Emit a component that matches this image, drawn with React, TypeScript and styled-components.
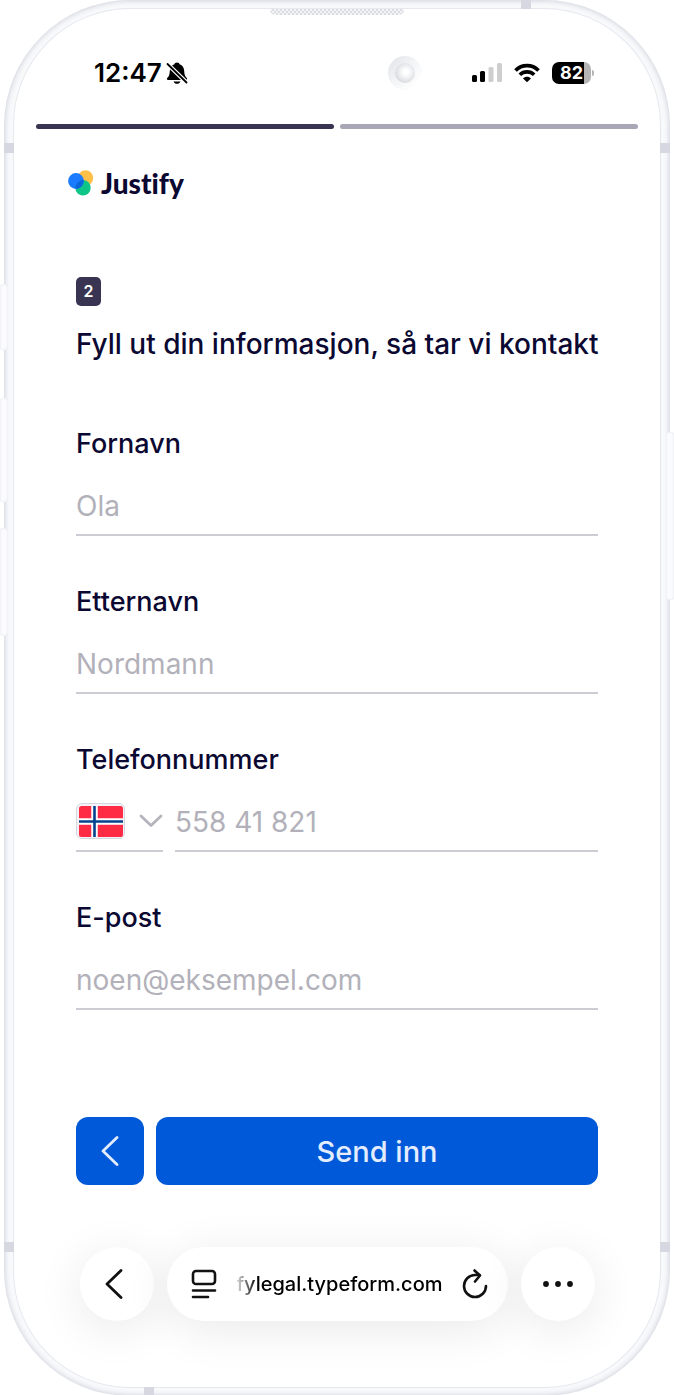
import React from "react";
import styled, { createGlobalStyle } from "styled-components";

const GlobalStyle = createGlobalStyle`
  * { box-sizing: border-box; }
  body {
    margin: 0;
    background: #ffffff;
    font-family: Inter, "Liberation Sans", sans-serif;
    color: #0b0831;
  }
  button, input, select { font: inherit; color: inherit; }
`;

const Stage = styled.main`
  padding: 0 4px;
  overflow: hidden;
`;

const Device = styled.div`
  position: relative;
  padding: 9px 10px;
  border-radius: 126px;
  background: #f8f9fb;
  box-shadow: inset 0 0 5px 1px #d0d3dd;
`;

const Screen = styled.div`
  padding: 47px 0 66px;
  border-radius: 116px;
  background: #ffffff;
  box-shadow: 0 0 0 1px #e6e8ee;
  overflow: hidden;
`;

const Speaker = styled.span`
  position: absolute;
  top: 9px;
  left: 50%;
  width: 134px;
  height: 6px;
  transform: translateX(-50%);
  border-radius: 0 0 5px 5px;
  background: repeating-conic-gradient(#dcdde3 0% 25%, #f4f4f7 0% 50%) 0 0 / 4px 4px;
`;

const Antenna = styled.span<{ $side: "left" | "right"; $edge: "top" | "bottom" }>`
  position: absolute;
  ${(p) => p.$side}: 0;
  ${(p) => p.$edge}: ${(p) => (p.$edge === "top" ? 143 : 144)}px;
  width: 10px;
  height: 10px;
  background: #d6d7e1;
`;

const AntennaCap = styled.span<{ $edge: "top" | "bottom" }>`
  position: absolute;
  ${(p) => p.$edge}: 0;
  ${(p) => (p.$edge === "top" ? "right: 139px" : "left: 140px")};
  width: 10px;
  height: 9px;
  background: #d6d7e1;
`;

const SideKey = styled.span<{ $side: "left" | "right"; $top: number; $length: number }>`
  position: absolute;
  ${(p) => p.$side}: -4px;
  top: ${(p) => p.$top}px;
  width: 8px;
  height: ${(p) => p.$length}px;
  border-radius: 3px;
  background: #fbfbfd;
  box-shadow: inset 0 0 2px #d9dbe6;
`;

const StatusBar = styled.header`
  display: flex;
  align-items: center;
  justify-content: space-between;
  height: 34px;
  padding: 0 66px 0 80px;
  color: #000000;
`;

const StatusGroup = styled.div<{ $gap: number }>`
  display: flex;
  align-items: center;
  gap: ${(p) => p.$gap}px;
`;

const Clock = styled.time`
  font-size: 26px;
  line-height: 34px;
  font-weight: 600;
`;

const Camera = styled.span`
  display: flex;
  align-items: center;
  justify-content: center;
  width: 34px;
  height: 34px;
  border-radius: 50%;
  background: linear-gradient(135deg, #dfe1e6, #f3f4f6 45%, #ffffff 85%);

  &::after {
    content: "";
    width: 20px;
    height: 20px;
    border-radius: 50%;
    background: radial-gradient(circle at 55% 45%, #ffffff 15%, #d6d9de 75%);
  }
`;

const Battery = styled.span`
  display: flex;
  align-items: center;
  gap: 1px;

  &::after {
    content: "";
    width: 2px;
    height: 6px;
    border-radius: 0 3px 3px 0;
    background: #b5b5b5;
  }
`;

const BatteryLevel = styled.span`
  width: 39px;
  height: 22px;
  border-radius: 7px;
  background: linear-gradient(90deg, #000000 82%, #b5b5b5 82%);
  color: #ffffff;
  font-size: 18px;
  line-height: 22px;
  font-weight: 700;
  text-align: center;
`;

const Progress = styled.div`
  display: flex;
  gap: 6px;
  margin: 34px 22px 0;
`;

const ProgressStep = styled.span<{ $done?: boolean }>`
  flex: 1;
  height: 5px;
  border-radius: 3px;
  background: ${(p) => (p.$done ? "#393452" : "#a9a7b5")};
`;

const Brand = styled.a`
  display: flex;
  align-items: center;
  gap: 7px;
  width: fit-content;
  height: 34px;
  margin: 37px 54px 0;
  color: #0b0831;
  font-family: Lato, sans-serif;
  font-size: 28px;
  line-height: 34px;
  font-weight: 900;
  font-variant-ligatures: none;
  text-decoration: none;
`;

const Form = styled.form`
  display: flex;
  flex-direction: column;
  margin: 77px 62px 0;
`;

const StepBadge = styled.span`
  width: 25px;
  height: 29px;
  border-radius: 5px;
  background: #393452;
  color: #ffffff;
  font-size: 16px;
  line-height: 29px;
  font-weight: 600;
  text-align: center;
`;

const Title = styled.h1`
  margin: 18px 0 62px;
  font-size: 28px;
  line-height: 40px;
  font-weight: 450;
  white-space: nowrap;
`;

const Fields = styled.div`
  display: flex;
  flex-direction: column;
  gap: 48px;
`;

const Field = styled.div`
  display: flex;
  flex-direction: column;
  gap: 20px;
`;

const Label = styled.label`
  font-size: 27px;
  line-height: 36px;
  font-weight: 450;
`;

const TextInput = styled.input`
  flex: 1;
  width: 100%;
  min-width: 0;
  height: 54px;
  min-height: 54px;
  padding: 0 0 4px;
  border: 0;
  border-bottom: 2px solid #cdccd4;
  border-radius: 0;
  outline: 0;
  background: transparent;
  font-size: 28px;

  &::placeholder {
    color: #b2b1ba;
    opacity: 1;
  }
`;

const PhoneRow = styled.div`
  display: flex;
  gap: 12px;
`;

const Country = styled.div`
  position: relative;
  display: flex;
  align-items: center;
  gap: 14px;
  width: 87px;
  height: 54px;
  padding-bottom: 6px;
  border-bottom: 2px solid #cdccd4;
`;

const CountrySelect = styled.select`
  position: absolute;
  inset: 0;
  width: 100%;
  opacity: 0;
  cursor: pointer;
`;

const Actions = styled.div`
  display: flex;
  gap: 12px;
  margin-top: 107px;
`;

const ActionButton = styled.button<{ $wide?: boolean }>`
  display: flex;
  flex: ${(p) => (p.$wide ? "1" : "0 0 68px")};
  align-items: center;
  justify-content: center;
  height: 68px;
  padding: 0;
  border: 0;
  border-radius: 12px;
  background: #0059d8;
  color: #e3edff;
  font-size: 29px;
  font-weight: 500;
  cursor: pointer;
`;

const BrowserBar = styled.nav`
  display: flex;
  gap: 13px;
  margin: 62px 65px 0 66px;
  color: #111111;
`;

const RoundButton = styled.button<{ $back?: boolean }>`
  display: flex;
  flex: 0 0 74px;
  align-items: center;
  justify-content: center;
  height: 74px;
  padding: 0 ${(p) => (p.$back ? 6 : 0)}px 0 0;
  border: 0;
  border-radius: 50%;
  background: #ffffff;
  box-shadow: 0 8px 48px rgba(0, 0, 0, 0.09);
  cursor: pointer;
`;

const AddressBar = styled.div`
  display: flex;
  flex: 1;
  align-items: center;
  justify-content: space-between;
  min-width: 0;
  height: 74px;
  padding: 0 20px 0 24px;
  border-radius: 37px;
  background: #ffffff;
  box-shadow: 0 8px 48px rgba(0, 0, 0, 0.09);
`;

const PlainButton = styled.button`
  display: flex;
  padding: 0;
  border: 0;
  background: transparent;
  cursor: pointer;
`;

const Address = styled.span`
  color: #000000;
  font-size: 20px;
  line-height: 28px;
  font-weight: 450;
  white-space: nowrap;
  mask-image: linear-gradient(90deg, rgba(0, 0, 0, 0.15), #000000 20px);
`;

const SilentIcon = () => (
  <svg width="22" height="24" viewBox="0 0 22 24" aria-hidden="true">
    <path d="M11 1.5c1.5 0 2.3.8 2.6 1.8 3 .9 4.400 3.400 4.600 6.700.2 4 .9 5.300 2.400 6.800.9.9.6 2.200-.8 2.200H2.200C.8 19 .5 17.700 1.400 16.800c1.500-1.500 2.200-2.800 2.400-6.800C4 6.700 5.400 4.200 8.400 3.300 8.700 2.300 9.500 1.500 11 1.500Z" fill="#000" />
    <path d="M7.500 20.500h7c-.6 1.500-1.900 2.300-3.500 2.300s-2.900-.8-3.500-2.300Z" fill="#000" />
    <path d="M1 2.500 21 22" stroke="#fff" strokeWidth="4.200" />
    <path d="M1.500 3 20.500 21.500" stroke="#000" strokeWidth="1.800" strokeLinecap="round" />
  </svg>
);

const SignalIcon = () => (
  <svg width="30" height="20" viewBox="0 0 30 20" aria-hidden="true">
    <rect x="0" y="12" width="5" height="7" rx="1.500" />
    <rect x="8" y="8" width="5" height="11" rx="1.500" />
    <rect x="16.500" y="4" width="5" height="15" rx="1.500" fill="#cecece" />
    <rect x="25" y="0" width="5" height="19" rx="1.500" fill="#cecece" />
  </svg>
);

const WifiIcon = () => (
  <svg width="26" height="20" viewBox="0 0 26 20" fill="none" stroke="#000" strokeWidth="3.600" aria-hidden="true">
    <path d="M1.500 7.400C7.800 1 18.200 1 24.500 7.400" />
    <path d="M5.800 11.800c4-3.900 10.400-3.900 14.400 0" />
    <path d="M13 19.300 9 15.400c2.200-2.100 5.800-2.100 8 0Z" fill="#000" stroke="none" />
  </svg>
);

const LogoMark = () => (
  <svg width="26" height="26" viewBox="0 0 26 26" aria-hidden="true">
    <circle cx="17.500" cy="8" r="7.700" fill="#ffc04a" />
    <circle cx="15" cy="17.700" r="7.700" fill="#0cc587" />
    <circle cx="8" cy="11" r="7.900" fill="#1b7bff" />
    <path d="M15.500 10.100A7.700 7.700 0 0 0 7.600 18.900 7.900 7.900 0 0 0 15.500 10.100Z" fill="#0a66d9" />
  </svg>
);

const NorwayFlag = () => (
  <svg width="49" height="36" viewBox="0 0 49 36" aria-hidden="true">
    <rect x=".5" y=".5" width="48" height="35" rx="5.500" fill="#f3f3f7" stroke="#d6d6df" />
    <rect x="3" y="3" width="44" height="31" rx="2.500" fill="#ff2b44" />
    <path d="M18.500 3v31M3 18.500h44" stroke="#fff" strokeWidth="6.500" />
    <path d="M18.500 3v31M3 18.500h44" stroke="#06418e" strokeWidth="2.600" />
  </svg>
);

const ChevronDown = () => (
  <svg width="24" height="14" viewBox="0 0 24 14" fill="none" aria-hidden="true">
    <path d="m2 2 10 9.500L22 2" stroke="#b5b4bd" strokeWidth="2.800" strokeLinecap="round" strokeLinejoin="round" />
  </svg>
);

const ChevronLeft = () => (
  <svg width="18" height="30" viewBox="0 0 18 30" fill="none" aria-hidden="true">
    <path d="M16 1.500 2 15l14 13.500" stroke="currentColor" strokeWidth="2.800" strokeLinecap="round" strokeLinejoin="round" />
  </svg>
);

const PageMenuIcon = () => (
  <svg width="26" height="30" viewBox="0 0 26 30" fill="none" stroke="#111" strokeWidth="2.600" strokeLinecap="round" aria-hidden="true">
    <rect x="2" y="2" width="22" height="13" rx="3" />
    <path d="M2 21.500h22M2 28h15" />
  </svg>
);

const ReloadIcon = () => (
  <svg width="26" height="30" viewBox="0 0 26 30" fill="none" stroke="#111" strokeWidth="2.600" strokeLinecap="round" strokeLinejoin="round" aria-hidden="true">
    <path d="M24 17a11 11 0 1 1-11-11h4.500" />
    <path d="m12.500 1.500 5.500 5-5 6" />
  </svg>
);

const MoreIcon = () => (
  <svg width="32" height="8" viewBox="0 0 32 8" fill="#111" aria-hidden="true">
    <circle cx="4" cy="4" r="2.900" />
    <circle cx="16" cy="4" r="2.900" />
    <circle cx="28" cy="4" r="2.900" />
  </svg>
);

export default function App() {
  return (
    <>
      <GlobalStyle />
      <Stage>
        <Device>
          <Antenna $side="left" $edge="top" />
          <Antenna $side="right" $edge="top" />
          <Antenna $side="left" $edge="bottom" />
          <Antenna $side="right" $edge="bottom" />
          <AntennaCap $edge="top" />
          <AntennaCap $edge="bottom" />
          <SideKey $side="left" $top={284} $length={66} />
          <SideKey $side="left" $top={398} $length={104} />
          <SideKey $side="left" $top={528} $length={108} />
          <SideKey $side="right" $top={432} $length={168} />
          <Screen>
            <StatusBar>
              <StatusGroup $gap={4}>
                <Clock>12:47</Clock>
                <SilentIcon />
              </StatusGroup>
              <StatusGroup $gap={50}>
                <Camera />
                <StatusGroup $gap={12}>
                  <SignalIcon />
                  <WifiIcon />
                  <Battery>
                    <BatteryLevel>82</BatteryLevel>
                  </Battery>
                </StatusGroup>
              </StatusGroup>
            </StatusBar>

            <Progress>
              <ProgressStep $done />
              <ProgressStep />
            </Progress>

            <Brand href="#">
              <LogoMark />
              Justify
            </Brand>

            <Form onSubmit={(event) => event.preventDefault()}>
              <StepBadge>2</StepBadge>
              <Title>Fyll ut din informasjon, så tar vi kontakt</Title>
              <Fields>
                <Field>
                  <Label htmlFor="first-name">Fornavn</Label>
                  <TextInput id="first-name" placeholder="Ola" />
                </Field>
                <Field>
                  <Label htmlFor="last-name">Etternavn</Label>
                  <TextInput id="last-name" placeholder="Nordmann" />
                </Field>
                <Field>
                  <Label htmlFor="phone">Telefonnummer</Label>
                  <PhoneRow>
                    <Country>
                      <NorwayFlag />
                      <ChevronDown />
                      <CountrySelect aria-label="Land" defaultValue="NO">
                        <option value="NO">Norge</option>
                      </CountrySelect>
                    </Country>
                    <TextInput id="phone" type="tel" placeholder="558 41 821" />
                  </PhoneRow>
                </Field>
                <Field>
                  <Label htmlFor="email">E-post</Label>
                  <TextInput id="email" type="email" placeholder="noen@eksempel.com" />
                </Field>
              </Fields>
              <Actions>
                <ActionButton type="button" aria-label="Tilbake">
                  <ChevronLeft />
                </ActionButton>
                <ActionButton type="submit" $wide>
                  Send inn
                </ActionButton>
              </Actions>
            </Form>

            <BrowserBar>
              <RoundButton $back aria-label="Forrige side">
                <ChevronLeft />
              </RoundButton>
              <AddressBar>
                <PlainButton aria-label="Sidemeny">
                  <PageMenuIcon />
                </PlainButton>
                <Address>fylegal.typeform.com</Address>
                <PlainButton aria-label="Last inn på nytt">
                  <ReloadIcon />
                </PlainButton>
              </AddressBar>
              <RoundButton aria-label="Mer">
                <MoreIcon />
              </RoundButton>
            </BrowserBar>
          </Screen>
          <Speaker />
        </Device>
      </Stage>
    </>
  );
}
